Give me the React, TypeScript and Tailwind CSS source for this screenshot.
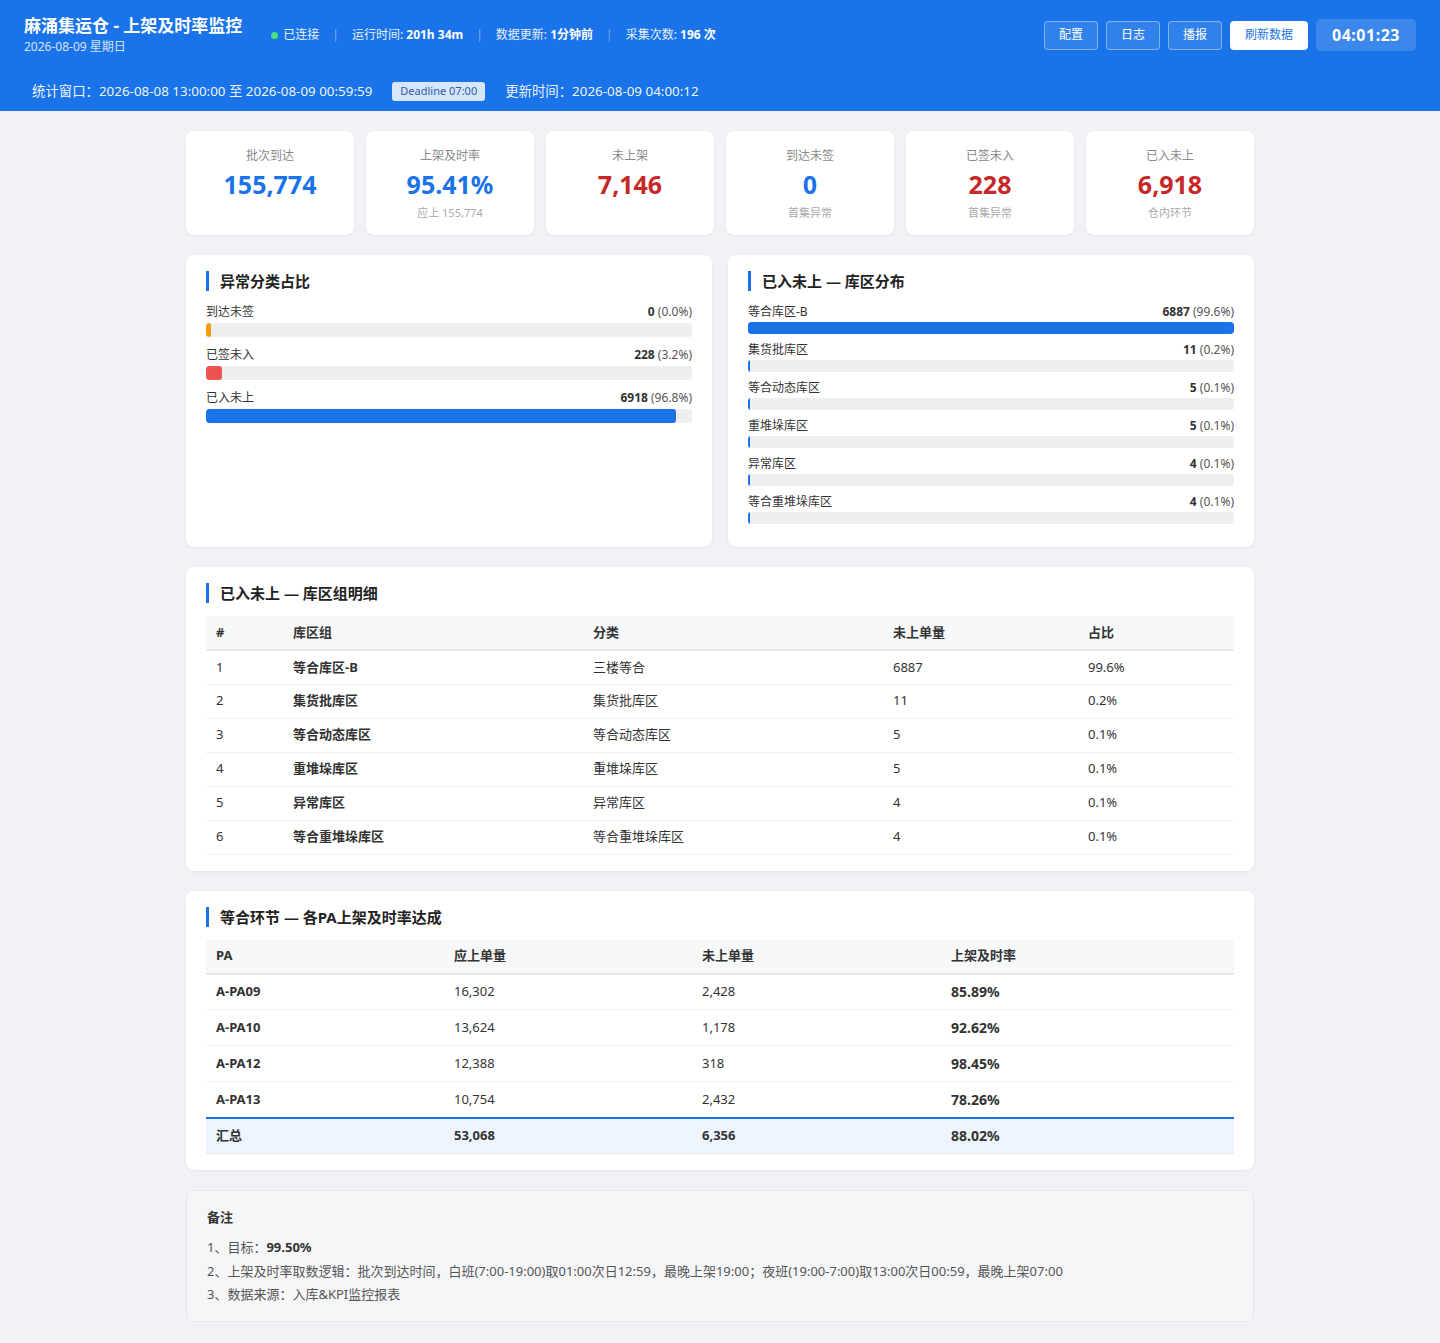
import React from "react";

const FONT = { fontFamily: '"Noto Sans", "Noto Sans CJK SC", sans-serif' };

function Kpi({ label, value, sub, color }: { label: string; value: string; sub?: string; color: string }) {
  return (
    <div className="bg-white rounded-lg shadow-[0_1px_3px_rgba(0,0,0,0.06)] h-[104px] flex flex-col items-center pt-[17px]">
      <div className="text-[12px] leading-[16px] text-[#888]">{label}</div>
      <div className={`text-[25px] leading-[32px] font-bold mt-[4px] ${color}`}>{value}</div>
      {sub && <div className="text-[11px] leading-[16px] text-[#aaa] mt-[5px]">{sub}</div>}
    </div>
  );
}

function Title({ children }: { children: React.ReactNode }) {
  return (
    <div className="border-l-[3px] border-[#1a73e8] pl-[11px] text-[15px] leading-[20px] font-bold text-[#222]">{children}</div>
  );
}

function Bar({ label, n, pct, width, color, h, mt }: { label: string; n: string; pct: string; width: string; color: string; h: string; mt: string }) {
  return (
    <div>
      <div className="flex justify-between text-[12px] leading-[16px] text-[#333]">
        <span>{label}</span>
        <span>
          <b className="font-bold">{n}</b> <span className="text-[#555]">({pct})</span>
        </span>
      </div>
      <div className={`${mt} ${h} bg-[#efefef] rounded-[3px] overflow-hidden`}>
        <div className={`h-full rounded-[3px] ${color}`} style={{ width }} />
      </div>
    </div>
  );
}

export default function App() {
  const zones = [
    ["等合库区-B", "6887", "99.6%", "100%"],
    ["集货批库区", "11", "0.2%", "0.4%"],
    ["等合动态库区", "5", "0.1%", "0.4%"],
    ["重堆垛库区", "5", "0.1%", "0.4%"],
    ["异常库区", "4", "0.1%", "0.4%"],
    ["等合重堆垛库区", "4", "0.1%", "0.4%"],
  ];
  const detail = [
    ["1", "等合库区-B", "三楼等合", "6887", "99.6%"],
    ["2", "集货批库区", "集货批库区", "11", "0.2%"],
    ["3", "等合动态库区", "等合动态库区", "5", "0.1%"],
    ["4", "重堆垛库区", "重堆垛库区", "5", "0.1%"],
    ["5", "异常库区", "异常库区", "4", "0.1%"],
    ["6", "等合重堆垛库区", "等合重堆垛库区", "4", "0.1%"],
  ];
  const pa = [
    ["A-PA09", "16,302", "2,428", "85.89%"],
    ["A-PA10", "13,624", "1,178", "92.62%"],
    ["A-PA12", "12,388", "318", "98.45%"],
    ["A-PA13", "10,754", "2,432", "78.26%"],
  ];
  return (
    <div style={FONT} className="min-h-[1343px] bg-[#f0f2f5] text-[#333]">
      {/* Header */}
      <div className="bg-[#1a73e8] text-white h-[111px] px-[24px]">
        <div className="flex items-center justify-between pt-[14px]">
          <div className="flex items-center">
            <div>
              <div className="text-[17px] leading-[24px] font-bold">麻涌集运仓 - 上架及时率监控</div>
              <div className="text-[12px] leading-[17px] text-white/80">2026-08-09 星期日</div>
            </div>
            <div className="flex items-center ml-[29px] mt-[1px] text-[12px] text-white/90">
              <span className="w-[7px] h-[7px] rounded-full bg-[#4ade80] mr-[5px]" />
              <span>已连接</span>
              <span className="mx-[13px] text-white/40">|</span>
              <span>运行时间: <b className="font-bold text-white">201h 34m</b></span>
              <span className="mx-[13px] text-white/40">|</span>
              <span>数据更新: <b className="font-bold text-white">1分钟前</b></span>
              <span className="mx-[13px] text-white/40">|</span>
              <span>采集次数: <b className="font-bold text-white">196 次</b></span>
            </div>
          </div>
          <div className="flex items-center gap-[8px] mt-[1px]">
            {["配置", "日志", "播报"].map((t) => (
              <div key={t} className="w-[54px] h-[29px] flex items-center justify-center rounded-[4px] border border-white/40 bg-white/10 text-[12px]">{t}</div>
            ))}
            <div className="w-[78px] h-[29px] flex items-center justify-center rounded-[4px] bg-white text-[#1a73e8] text-[12px]">刷新数据</div>
            <div className="w-[100px] h-[32px] flex items-center justify-center rounded-[5px] bg-white/15 text-[16px] font-bold tracking-[0.5px]">04:01:23</div>
          </div>
        </div>
        <div className="flex items-center mt-[26px] ml-[8px] text-[13.4px] text-white/95">
          <span>统计窗口：2026-08-08 13:00:00 至 2026-08-09 00:59:59</span>
          <span className="ml-[20px] px-[8px] h-[19px] flex items-center rounded-[3px] bg-[#d6e6fb] text-[#2a5daa] text-[11px]">Deadline 07:00</span>
          <span className="ml-[20px]">更新时间：2026-08-09 04:00:12</span>
        </div>
      </div>

      <div className="w-[1068px] mx-auto pt-[20px] pb-[21px] flex flex-col gap-[20px]">
        <div className="grid grid-cols-6 gap-[12px]">
          <Kpi label="批次到达" value="155,774" color="text-[#1a73e8]" />
          <Kpi label="上架及时率" value="95.41%" sub="应上 155,774" color="text-[#1a73e8]" />
          <Kpi label="未上架" value="7,146" color="text-[#c62828]" />
          <Kpi label="到达未签" value="0" sub="首集异常" color="text-[#1a73e8]" />
          <Kpi label="已签未入" value="228" sub="首集异常" color="text-[#c62828]" />
          <Kpi label="已入未上" value="6,918" sub="仓内环节" color="text-[#c62828]" />
        </div>

        <div className="grid grid-cols-2 gap-[16px]">
          <div className="bg-white rounded-lg shadow-[0_1px_3px_rgba(0,0,0,0.06)] h-[292px] px-[20px] pt-[16px]">
            <Title>异常分类占比</Title>
            <div className="mt-[13px] flex flex-col gap-[10px]">
              <Bar label="到达未签" n="0" pct="0.0%" width="1%" color="bg-[#f59e0b]" h="h-[14px]" mt="mt-[3px]" />
              <Bar label="已签未入" n="228" pct="3.2%" width="3.2%" color="bg-[#ef5350]" h="h-[14px]" mt="mt-[3px]" />
              <Bar label="已入未上" n="6918" pct="96.8%" width="96.8%" color="bg-[#1a73e8]" h="h-[14px]" mt="mt-[3px]" />
            </div>
          </div>
          <div className="bg-white rounded-lg shadow-[0_1px_3px_rgba(0,0,0,0.06)] h-[292px] px-[20px] pt-[16px]">
            <Title>已入未上 — 库区分布</Title>
            <div className="mt-[13px] flex flex-col gap-[8px]">
              {zones.map((z) => (
                <Bar key={z[0]} label={z[0]} n={z[1]} pct={z[2]} width={z[3]} color="bg-[#1a73e8]" h="h-[12px]" mt="mt-[2px]" />
              ))}
            </div>
          </div>
        </div>

        <div className="bg-white rounded-lg shadow-[0_1px_3px_rgba(0,0,0,0.06)] px-[20px] pt-[16px] pb-[16px]">
          <Title>已入未上 — 库区组明细</Title>
          <table className="w-full mt-[13px] text-[13px] border-collapse">
            <thead>
              <tr className="bg-[#f7f8fa] border-b-2 border-[#e8e8e8] h-[34px] text-left">
                <th className="w-[77px] pl-[10px] font-bold">#</th>
                <th className="w-[300px] pl-[10px] font-bold">库区组</th>
                <th className="w-[300px] pl-[10px] font-bold">分类</th>
                <th className="w-[195px] pl-[10px] font-bold">未上单量</th>
                <th className="pl-[10px] font-bold">占比</th>
              </tr>
            </thead>
            <tbody>
              {detail.map((r) => (
                <tr key={r[0]} className="h-[34px] border-b border-[#eeeeee]">
                  <td className="pl-[10px]">{r[0]}</td>
                  <td className="pl-[10px] font-bold">{r[1]}</td>
                  <td className="pl-[10px]">{r[2]}</td>
                  <td className="pl-[10px]">{r[3]}</td>
                  <td className="pl-[10px]">{r[4]}</td>
                </tr>
              ))}
            </tbody>
          </table>
        </div>

        <div className="bg-white rounded-lg shadow-[0_1px_3px_rgba(0,0,0,0.06)] px-[20px] pt-[16px] pb-[16px]">
          <Title>等合环节 — 各PA上架及时率达成</Title>
          <table className="w-full mt-[13px] text-[13px] border-collapse">
            <thead>
              <tr className="bg-[#f7f8fa] border-b-2 border-[#e8e8e8] h-[34px] text-left">
                <th className="w-[238px] pl-[10px] font-bold">PA</th>
                <th className="w-[248px] pl-[10px] font-bold">应上单量</th>
                <th className="w-[249px] pl-[10px] font-bold">未上单量</th>
                <th className="pl-[10px] font-bold">上架及时率</th>
              </tr>
            </thead>
            <tbody>
              {pa.map((r, i) => (
                <tr key={r[0]} className={`h-[36px] ${i === pa.length - 1 ? "border-b-2 border-[#1a73e8]" : "border-b border-[#eeeeee]"}`}>
                  <td className="pl-[10px] font-bold">{r[0]}</td>
                  <td className="pl-[10px]">{r[1]}</td>
                  <td className="pl-[10px]">{r[2]}</td>
                  <td className="pl-[10px] font-bold text-[14px]">{r[3]}</td>
                </tr>
              ))}
              <tr className="h-[36px] bg-[#eef5fe] border-b border-[#e8e8e8] font-bold">
                <td className="pl-[10px]">汇总</td>
                <td className="pl-[10px]">53,068</td>
                <td className="pl-[10px]">6,356</td>
                <td className="pl-[10px] text-[14px]">88.02%</td>
              </tr>
            </tbody>
          </table>
        </div>

        <div className="bg-[#f5f6f8] border border-[#e6e8eb] rounded-lg h-[132px] px-[20px] pt-[17px] text-[13px] text-[#555]">
          <div className="font-bold text-[#333] leading-[18px]">备注</div>
          <div className="mt-[10px] leading-[23.5px]">
            <div>1、目标：<b className="font-bold text-[#333]">99.50%</b></div>
            <div>2、上架及时率取数逻辑：批次到达时间，白班(7:00-19:00)取01:00次日12:59，最晚上架19:00；夜班(19:00-7:00)取13:00次日00:59，最晚上架07:00</div>
            <div>3、数据来源：入库&KPI监控报表</div>
          </div>
        </div>
      </div>
    </div>
  );
}
